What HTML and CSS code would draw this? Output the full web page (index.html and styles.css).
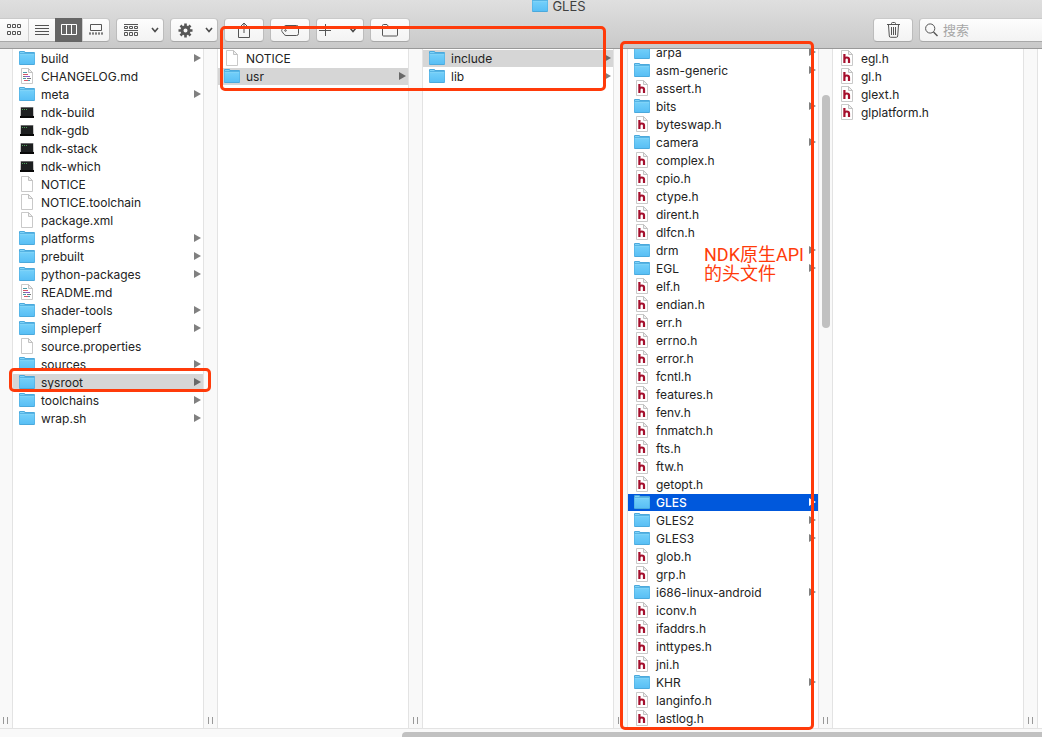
FILE: index.html
```html
<!DOCTYPE html>
<html lang="zh-CN">
<head>
<meta charset="utf-8">
<title>GLES</title>
<link rel="stylesheet" href="styles.css">
</head>
<body>
<svg class="sprite" aria-hidden="true">
  <defs>
    <linearGradient id="blue" x1="0" y1="0" x2="0" y2="1"><stop offset="0" stop-color="#74d0fa"/><stop offset="1" stop-color="#59bff5"/></linearGradient>
    <symbol id="folder" viewBox="0 0 16 16"><path d="M0 14V2Q0 1 1 1H5Q5.800 1 6.300 2H15Q16 2 16 3V14Q16 15 15 15H1Q0 15 0 14Z" fill="#4ba9dc"/><path d="M.5 4H15.500V14H.5Z" fill="url(#blue)"/><path d="M1 2.500H5.500M1 4.500H15" stroke="#7fd3f8"/><path d="M0 3.500H16" stroke="#56b4e4"/></symbol>
    <symbol id="doc" viewBox="0 0 16 16"><path d="M2.500.5H9.500L13.500 4.500V15.500H2.500Z" fill="#fff" stroke="#c9c9c9"/><path d="M9.500.5V4.500H13.500Z" fill="#f1f1f1" stroke="#c2c2c2"/></symbol>
    <symbol id="md" viewBox="0 0 16 16"><use href="#doc"/><path d="M4 4.500H8M4 10.500H7M9 12.500H11" stroke="#4a9aa8"/><path d="M4 6.500H9M5 12.500H9" stroke="#d4576a"/><path d="M4 8.500H6M8 10.500H12" stroke="#777"/><path d="M6 8.500H11" stroke="#8a5ec8"/></symbol>
    <symbol id="head" viewBox="0 0 16 16"><use href="#doc"/><path d="M5.400 4V13M5.400 9.500Q5.700 7.500 7.800 7.500Q10 7.500 10 9.500V13" fill="none" stroke="#a50f2d" stroke-width="2.200"/></symbol>
    <symbol id="exec" viewBox="0 0 16 16"><path d="M1.500 3H14.500L15 14H1Z" fill="#b5b5b5"/><path d="M2 3.500H14V12.500H2Z" fill="#1d1f20"/><path d="M1 12H15V14H1Z" fill="#090909"/><path d="M3 5.500H8" stroke="#4c9b58" stroke-dasharray="1 1"/></symbol>
    <symbol id="chev" viewBox="0 0 8 6"><path d="M1 1L4 4.500L7 1" fill="none" stroke="#4c4c4c" stroke-width="1.600"/></symbol>
  </defs>
</svg>

<div class="window">
  <header class="top">
    <h1 class="title"><svg class="icon"><use href="#folder"/></svg>GLES</h1>
    <div class="toolbar">
      <div class="segments">
        <button class="seg" aria-label="图标"><svg width="14" height="12" viewBox="0 0 14 12"><path d="M.5.5h3v3h-3zM5.500.5h3v3h-3zM10.500.5h3v3h-3zM.5 7.500h3v3h-3zM5.500 7.500h3v3h-3zM10.500 7.500h3v3h-3z"/></svg></button>
        <button class="seg" aria-label="列表"><svg width="14" height="12" viewBox="0 0 14 12"><path d="M0 1.500H14M0 4.500H14M0 7.500H14M0 10.500H14"/></svg></button>
        <button class="seg active" aria-label="分栏"><svg width="16" height="12" viewBox="0 0 16 12"><path d="M.5.5h15v10H.5zM5.500.5v10M10.500.5v10"/></svg></button>
        <button class="seg" aria-label="画廊"><svg width="14" height="12" viewBox="0 0 14 12"><path d="M1.500.5h11v6h-11zM0 10H2M3 10H5M6 10H8M9 10H11M12 10H14M0 9H2M3 9H5M6 9H8M9 9H11M12 9H14"/></svg></button>
      </div>
      <button class="btn menu" aria-label="分组"><svg width="15" height="13" viewBox="0 0 15 13"><path d="M0 .5H14M0 6.500H14M.5 2.500h3v2h-3zM5.500 2.500h3v2h-3zM10.500 2.500h3v2h-3zM.5 8.500h3v3h-3zM5.500 8.500h3v3h-3zM10.500 8.500h3v3h-3z"/></svg><svg class="chev"><use href="#chev"/></svg></button>
      <button class="btn menu" aria-label="操作"><svg width="15" height="15" viewBox="0 0 15 15"><circle cx="7.500" cy="7.500" r="3.500" stroke-width="3"/><path d="M7.500.5V3M7.500 12V14.500M.5 7.500H3M12 7.500H14.500M2.500 2.500L4.300 4.300M10.700 10.700L12.500 12.500M12.500 2.500L10.700 4.300M4.300 10.700L2.500 12.500" stroke-width="2.600"/></svg><svg class="chev"><use href="#chev"/></svg></button>
      <button class="btn" aria-label="共享"><svg width="12" height="16" viewBox="0 0 12 16"><path d="M4 5.500H.5V15.500H11.500V5.500H8M6 11V1M3 4L6 1L9 4"/></svg></button>
      <button class="btn" aria-label="标签"><svg width="18" height="11" viewBox="0 0 18 11"><path d="M5 .5H15.500Q17.500.5 17.500 2.500V8.500Q17.500 10.500 15.500 10.500H5Q4 10.500 3 9.300L1 6.500Q.3 5.500 1 4.500L3 1.700Q4 .5 5 .5Z"/><circle cx="4.500" cy="5.500" r=".8"/></svg></button>
      <button class="btn menu add" aria-label="新建"><svg width="12" height="12" viewBox="0 0 12 12"><path d="M6.500 0V12M0 6.500H12"/></svg><svg class="chev"><use href="#chev"/></svg></button>
      <button class="btn" aria-label="文件夹"><svg width="16" height="13" viewBox="0 0 16 13"><path d="M.5 11V1.500Q.5.5 1.500.5H5L6.500 2.500H14.500Q15.500 2.500 15.500 3.500V11Q15.500 12 14.500 12H1.500Q.5 12 .5 11ZM2.500 4.500H13.500"/></svg></button>
      <button class="btn trash" aria-label="删除"><svg width="13" height="16" viewBox="0 0 13 16"><path d="M0 2.500H13M4.500 2V1.500Q4.500.5 5.500.5H7.500Q8.500.5 8.500 1.500V2M1.500 3L2.300 14Q2.400 15.300 3.600 15.300H9.400Q10.600 15.300 10.700 14L11.500 3M4.500 5V13M6.500 5V13M8.500 5V13"/></svg></button>
      <label class="search"><svg width="13" height="14" viewBox="0 0 13 14"><circle cx="5.200" cy="5.500" r="4.600"/><path d="M8.500 9L12.500 13" stroke-width="1.400"/></svg><input type="search" placeholder="搜索" aria-label="搜索"></label>
    </div>
  </header>

  <main class="columns">
    <div class="gutter first"><i class="grip"></i></div>
    <ul class="column">
      <li class="row dir"><svg class="icon"><use href="#folder"/></svg>build</li>
      <li class="row"><svg class="icon"><use href="#md"/></svg>CHANGELOG.md</li>
      <li class="row dir"><svg class="icon"><use href="#folder"/></svg>meta</li>
      <li class="row"><svg class="icon"><use href="#exec"/></svg>ndk-build</li>
      <li class="row"><svg class="icon"><use href="#exec"/></svg>ndk-gdb</li>
      <li class="row"><svg class="icon"><use href="#exec"/></svg>ndk-stack</li>
      <li class="row"><svg class="icon"><use href="#exec"/></svg>ndk-which</li>
      <li class="row"><svg class="icon"><use href="#doc"/></svg>NOTICE</li>
      <li class="row"><svg class="icon"><use href="#doc"/></svg>NOTICE.toolchain</li>
      <li class="row"><svg class="icon"><use href="#doc"/></svg>package.xml</li>
      <li class="row dir"><svg class="icon"><use href="#folder"/></svg>platforms</li>
      <li class="row dir"><svg class="icon"><use href="#folder"/></svg>prebuilt</li>
      <li class="row dir"><svg class="icon"><use href="#folder"/></svg>python-packages</li>
      <li class="row"><svg class="icon"><use href="#md"/></svg>README.md</li>
      <li class="row dir"><svg class="icon"><use href="#folder"/></svg>shader-tools</li>
      <li class="row dir"><svg class="icon"><use href="#folder"/></svg>simpleperf</li>
      <li class="row"><svg class="icon"><use href="#doc"/></svg>source.properties</li>
      <li class="row dir"><svg class="icon"><use href="#folder"/></svg>sources</li>
      <li class="row dir open"><svg class="icon"><use href="#folder"/></svg>sysroot</li>
      <li class="row dir"><svg class="icon"><use href="#folder"/></svg>toolchains</li>
      <li class="row dir"><svg class="icon"><use href="#folder"/></svg>wrap.sh</li>
    </ul>
    <div class="gutter"><i class="grip"></i></div>
    <ul class="column">
      <li class="row"><svg class="icon"><use href="#doc"/></svg>NOTICE</li>
      <li class="row dir open"><svg class="icon"><use href="#folder"/></svg>usr</li>
    </ul>
    <div class="gutter"><i class="grip"></i></div>
    <ul class="column">
      <li class="row dir open"><svg class="icon"><use href="#folder"/></svg>include</li>
      <li class="row dir"><svg class="icon"><use href="#folder"/></svg>lib</li>
    </ul>
    <div class="gutter"><i class="grip"></i></div>
    <ul class="column scrolled">
      <li class="row dir"><svg class="icon"><use href="#folder"/></svg>arpa</li>
      <li class="row dir"><svg class="icon"><use href="#folder"/></svg>asm-generic</li>
      <li class="row"><svg class="icon"><use href="#head"/></svg>assert.h</li>
      <li class="row dir"><svg class="icon"><use href="#folder"/></svg>bits</li>
      <li class="row"><svg class="icon"><use href="#head"/></svg>byteswap.h</li>
      <li class="row dir"><svg class="icon"><use href="#folder"/></svg>camera</li>
      <li class="row"><svg class="icon"><use href="#head"/></svg>complex.h</li>
      <li class="row"><svg class="icon"><use href="#head"/></svg>cpio.h</li>
      <li class="row"><svg class="icon"><use href="#head"/></svg>ctype.h</li>
      <li class="row"><svg class="icon"><use href="#head"/></svg>dirent.h</li>
      <li class="row"><svg class="icon"><use href="#head"/></svg>dlfcn.h</li>
      <li class="row dir"><svg class="icon"><use href="#folder"/></svg>drm</li>
      <li class="row dir"><svg class="icon"><use href="#folder"/></svg>EGL</li>
      <li class="row"><svg class="icon"><use href="#head"/></svg>elf.h</li>
      <li class="row"><svg class="icon"><use href="#head"/></svg>endian.h</li>
      <li class="row"><svg class="icon"><use href="#head"/></svg>err.h</li>
      <li class="row"><svg class="icon"><use href="#head"/></svg>errno.h</li>
      <li class="row"><svg class="icon"><use href="#head"/></svg>error.h</li>
      <li class="row"><svg class="icon"><use href="#head"/></svg>fcntl.h</li>
      <li class="row"><svg class="icon"><use href="#head"/></svg>features.h</li>
      <li class="row"><svg class="icon"><use href="#head"/></svg>fenv.h</li>
      <li class="row"><svg class="icon"><use href="#head"/></svg>fnmatch.h</li>
      <li class="row"><svg class="icon"><use href="#head"/></svg>fts.h</li>
      <li class="row"><svg class="icon"><use href="#head"/></svg>ftw.h</li>
      <li class="row"><svg class="icon"><use href="#head"/></svg>getopt.h</li>
      <li class="row dir selected"><svg class="icon"><use href="#folder"/></svg>GLES</li>
      <li class="row dir"><svg class="icon"><use href="#folder"/></svg>GLES2</li>
      <li class="row dir"><svg class="icon"><use href="#folder"/></svg>GLES3</li>
      <li class="row"><svg class="icon"><use href="#head"/></svg>glob.h</li>
      <li class="row"><svg class="icon"><use href="#head"/></svg>grp.h</li>
      <li class="row dir"><svg class="icon"><use href="#folder"/></svg>i686-linux-android</li>
      <li class="row"><svg class="icon"><use href="#head"/></svg>iconv.h</li>
      <li class="row"><svg class="icon"><use href="#head"/></svg>ifaddrs.h</li>
      <li class="row"><svg class="icon"><use href="#head"/></svg>inttypes.h</li>
      <li class="row"><svg class="icon"><use href="#head"/></svg>jni.h</li>
      <li class="row dir"><svg class="icon"><use href="#folder"/></svg>KHR</li>
      <li class="row"><svg class="icon"><use href="#head"/></svg>langinfo.h</li>
      <li class="row"><svg class="icon"><use href="#head"/></svg>lastlog.h</li>
    </ul>
    <div class="gutter"><i class="thumb"></i><i class="grip"></i></div>
    <ul class="column">
      <li class="row"><svg class="icon"><use href="#head"/></svg>egl.h</li>
      <li class="row"><svg class="icon"><use href="#head"/></svg>gl.h</li>
      <li class="row"><svg class="icon"><use href="#head"/></svg>glext.h</li>
      <li class="row"><svg class="icon"><use href="#head"/></svg>glplatform.h</li>
    </ul>
    <div class="gutter"><i class="grip"></i></div>
  </main>
  <footer class="hscroll"><div class="hthumb"></div></footer>

  <div class="mark mark-path"></div>
  <div class="mark mark-sysroot"></div>
  <div class="mark mark-headers"></div>
  <p class="note">NDK原生API<br>的头文件</p>
</div>
</body>
</html>
```

FILE: styles.css
```css
* { box-sizing: border-box; }

body {
  margin: 0;
  font: 12px/17px Inter, "Noto Sans CJK SC", sans-serif;
  color: #222;
  background: #fff;
}

.sprite { position: absolute; width: 0; height: 0; }

.window {
  position: relative;
  display: flex;
  flex-direction: column;
  height: 100vh;
  overflow: hidden;
}

.icon { flex: none; width: 16px; height: 16px; }

/* Title and toolbar */
.top {
  flex: none;
  background: linear-gradient(#dfdfdf, #c9c9c9);
  border-bottom: 1px solid #999;
}

.title {
  display: flex;
  justify-content: center;
  align-items: flex-end;
  gap: 4px;
  height: 12px;
  margin: 0 0 6px;
  padding-left: 76px;
  font-size: 13px;
  line-height: 12px;
  font-weight: 400;
  color: #404040;
}

.title .icon { margin-bottom: -1px; }

.toolbar {
  display: flex;
  gap: 6px;
  padding-bottom: 6px;
}

.segments, .btn, .search {
  height: 24px;
  border: 1px solid #bcbcbc;
  border-top-color: #cacaca;
  border-bottom-color: #a8a8a8;
  border-radius: 4px;
  background: linear-gradient(#fdfdfd, #f3f3f3);
}

.segments {
  display: flex;
  border-left: 0;
  border-radius: 0 4px 4px 0;
}

.seg, .btn {
  display: flex;
  align-items: center;
  justify-content: center;
  margin: 0;
  padding: 0;
}

.seg {
  width: 27px;
  border: 0;
  border-left: 1px solid #d0d0d0;
  background: none;
}

.seg:first-child { width: 28px; border-left: 0; }

.seg.active {
  height: 24px;
  margin-top: -1px;
  background: #666;
  border-color: #666;
}

.toolbar svg { flex: none; fill: none; stroke: #555; }
.toolbar .seg.active svg { stroke: #fff; }

.btn { width: 40px; }

.menu {
  width: 48px;
  gap: 12px;
  padding-left: 2px;
}

.menu.add { gap: 18px; padding-right: 4px; padding-left: 0; }

.chev { width: 8px; height: 6px; }

.trash { margin-left: auto; }

.search {
  display: flex;
  align-items: center;
  gap: 5px;
  width: 123px;
  padding-left: 5px;
  border-right: 0;
  border-radius: 4px 0 0 4px;
}

.search input {
  flex: 1;
  min-width: 0;
  padding: 0;
  border: 0;
  outline: 0;
  background: none;
  font: 13px/20px "Noto Sans CJK SC", sans-serif;
}

.search input::placeholder { color: #a6a6a6; }

/* Columns */
.columns {
  flex: 1;
  display: flex;
  min-height: 0;
  overflow: hidden;
}

.column {
  flex: none;
  display: flex;
  flex-direction: column;
  gap: 1px;
  width: 190px;
  margin: 0;
  padding: 1px 0 0;
  list-style: none;
}

.column.scrolled { margin-top: -6px; }

.row {
  flex: none;
  display: flex;
  align-items: flex-start;
  gap: 6px;
  height: 17px;
  padding: 0 2px 0 6px;
  white-space: nowrap;
}

.dir::after {
  content: "";
  align-self: center;
  margin: 0 0 1px auto;
  border: solid transparent;
  border-width: 4px 0 4px 7px;
  border-left-color: #808080;
}

.open { background: #d6d6d6; }

.open::after { border-left-color: #686868; }

.selected { background: #0058dc; color: #fff; font-weight: 500; }

.selected::after { border-left-color: #fff; }

.gutter {
  flex: none;
  position: relative;
  display: flex;
  justify-content: flex-end;
  align-items: flex-end;
  width: 15px;
  padding: 0 4px 4px 0;
  border: solid #e3e3e3;
  border-width: 0 1px;
  background: #f9f9f9;
}

.gutter.first { width: 13px; border-left: 0; }

.grip {
  width: 5px;
  height: 7px;
  border: solid #999;
  border-width: 0 1px;
}

.thumb {
  position: absolute;
  top: 46px;
  left: 3px;
  width: 8px;
  height: 233px;
  border-radius: 4px;
  background: #c1c1c1;
}

.hscroll {
  flex: none;
  height: 9px;
  padding: 3px 0 0 402px;
  border-top: 1px solid #e3e3e3;
  background: #f9f9f9;
}

.hthumb {
  height: 5px;
  border-radius: 4px 0 0 0;
  background: #c1c1c1;
}

/* Red annotations drawn over the window */
.mark {
  position: absolute;
  border: 3px solid #ff3b0a;
  border-radius: 5px;
}

.mark-path { left: 220px; top: 26px; width: 386px; height: 65px; }
.mark-sysroot { left: 9px; top: 368px; width: 202px; height: 24px; }
.mark-headers { left: 620px; top: 41px; width: 194px; height: 689px; }

.note {
  position: absolute;
  left: 704px;
  top: 245px;
  margin: 0;
  font: 18px/19px Roboto, "Noto Sans CJK SC", sans-serif;
  color: #ff3b0a;
}
```
